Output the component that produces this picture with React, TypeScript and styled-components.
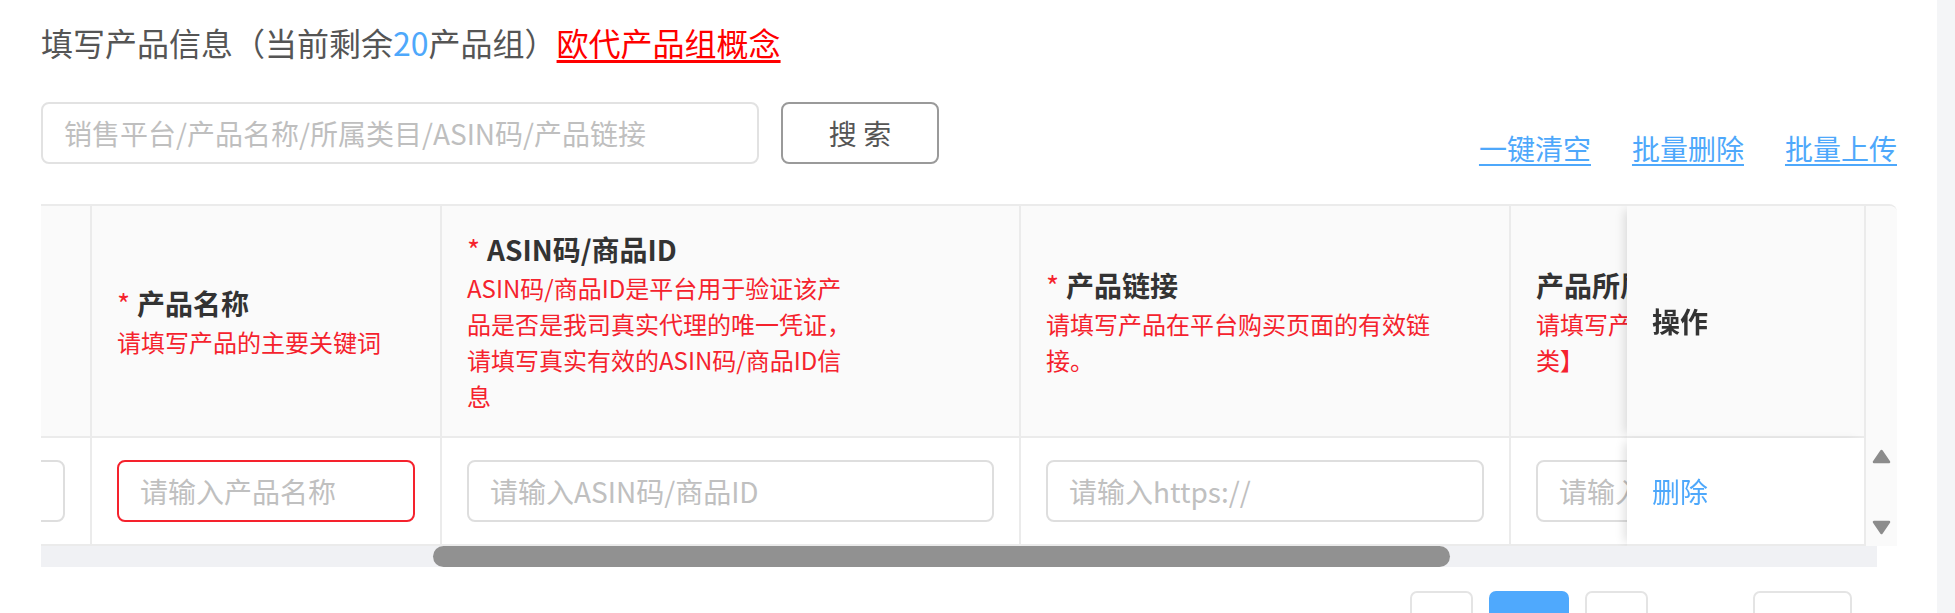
import React, { useLayoutEffect, useRef, useState } from "react";
import styled, { createGlobalStyle } from "styled-components";

const GlobalStyle = createGlobalStyle`
  html, body {
    margin: 0;
    padding: 0;
    background: #fff;
  }
  body {
    font-family: "Noto Sans CJK SC", "Noto Sans", sans-serif;
    overflow: hidden;
  }
`;

// columns before the ones in view; the table is scrolled past most of them
const SCROLL_LEFT = 703;

interface Column {
  key: string;
  width: number;
  label: string;
  required?: boolean;
  hint?: string;
  placeholder?: string;
  invalid?: boolean;
}

const columns: Column[] = [
  { key: "seq", width: 120, label: "序号" },
  { key: "platform", width: 300, label: "销售平台", required: true, hint: "请选择产品销售的平台", placeholder: "请选择销售平台" },
  { key: "brand", width: 334, label: "产品品牌", required: true, hint: "请填写产品的品牌名称", placeholder: "请输入产品品牌" },
  { key: "name", width: 350, label: "产品名称", required: true, hint: "请填写产品的主要关键词", placeholder: "请输入产品名称", invalid: true },
  {
    key: "asin",
    width: 579,
    label: "ASIN码/商品ID",
    required: true,
    hint: "ASIN码/商品ID是平台用于验证该产品是否是我司真实代理的唯一凭证，请填写真实有效的ASIN码/商品ID信息",
    placeholder: "请输入ASIN码/商品ID",
  },
  { key: "url", width: 490, label: "产品链接", required: true, hint: "请填写产品在平台购买页面的有效链接。", placeholder: "请输入https://" },
  { key: "category", width: 480, label: "产品所属类目", hint: "请填写产品所属类目【如：家居厨房类】", placeholder: "请输入产品所属类目" },
  { key: "remark", width: 403, label: "备注", hint: "选填", placeholder: "请输入备注" },
];

const ACTION_WIDTH = 239;

const Page = styled.div`
  display: flex;
  width: 1955px;
  height: 613px;
  overflow: hidden;
`;

const Main = styled.main`
  flex: 1;
  min-width: 0;
  padding: 18px 40px 0 41px;
`;

const RightStrip = styled.div`
  width: 18px;
  background: #f4f5f7;
`;

const Title = styled.h2`
  margin: 0;
  font-size: 32px;
  font-weight: 400;
  line-height: 48px;
  color: #555;
`;

const Count = styled.span`
  color: #4ea8fb;
`;

const ConceptLink = styled.a`
  color: #ff0000;
  text-decoration: underline;
  text-underline-offset: 4px;
  cursor: pointer;
`;

const Toolbar = styled.div`
  display: flex;
  align-items: flex-end;
  height: 62px;
  margin-top: 36px;
`;

const SearchInput = styled.input`
  box-sizing: border-box;
  width: 718px;
  height: 62px;
  padding: 0 21px;
  border: 2px solid #e2e2e2;
  border-radius: 8px;
  outline: none;
  font-family: inherit;
  font-size: 28px;
  color: #333;
  &::placeholder {
    color: #bfbfbf;
  }
`;

const SearchButton = styled.button`
  box-sizing: border-box;
  width: 158px;
  height: 62px;
  margin-left: 22px;
  border: 2px solid #9a9a9a;
  border-radius: 8px;
  background: #fff;
  font-family: inherit;
  font-size: 28px;
  color: #555;
  cursor: pointer;
`;

const Actions = styled.div`
  display: flex;
  gap: 41px;
  margin-left: auto;
`;

const ActionLink = styled.a`
  font-size: 28px;
  line-height: 32px;
  color: #4ea8fb;
  text-decoration: underline;
  text-underline-offset: 4px;
  cursor: pointer;
`;

const TableFrame = styled.div`
  display: flex;
  margin-top: 40px;
  border-top: 2px solid #ebebeb;
  border-top-right-radius: 8px;
  overflow: hidden;
`;

const ScrollPane = styled.div`
  flex: 1;
  min-width: 0;
  overflow: hidden;
`;

const Grid = styled.table`
  border-collapse: separate;
  border-spacing: 0;
  table-layout: fixed;
`;

const HeadCell = styled.th<{ $sticky?: boolean }>`
  box-sizing: border-box;
  height: 232px;
  padding: 0 25px;
  background: #fafafa;
  border-right: 2px solid #ebebeb;
  border-bottom: 2px solid #ebebeb;
  text-align: left;
  vertical-align: middle;
  font-weight: 400;
  ${(p) =>
    p.$sticky &&
    `
    position: sticky;
    right: 0;
    z-index: 2;
    box-shadow: -6px 0 10px -4px rgba(0, 0, 0, 0.14);
  `}
`;

const BodyCell = styled.td<{ $sticky?: boolean }>`
  box-sizing: border-box;
  height: 108px;
  padding: 0 25px;
  background: #fff;
  border-right: 2px solid #ebebeb;
  border-bottom: 2px solid #ebebeb;
  vertical-align: middle;
  font-size: 28px;
  color: #555;
  ${(p) =>
    p.$sticky &&
    `
    position: sticky;
    right: 0;
    z-index: 2;
    box-shadow: -6px 0 10px -4px rgba(0, 0, 0, 0.14);
  `}
`;

const HeadInner = styled.div`
  max-width: 390px;
`;

const HeadLabel = styled.div`
  font-size: 28px;
  line-height: 42px;
  font-weight: 700;
  color: #333;
  white-space: nowrap;
`;

const Star = styled.span`
  font-weight: 400;
  color: #f5222d;
  margin-right: 7px;
`;

const HeadHint = styled.div`
  font-size: 24px;
  line-height: 36px;
  color: #f5222d;
`;

const CellInput = styled.input<{ $invalid?: boolean }>`
  box-sizing: border-box;
  width: 100%;
  height: 62px;
  padding: 0 21px;
  border: 2px solid ${(p) => (p.$invalid ? "#f5222d" : "#dedede")};
  border-radius: 8px;
  outline: none;
  font-family: inherit;
  font-size: 28px;
  color: #333;
  &::placeholder {
    color: #c0c0c0;
  }
`;

const DeleteLink = styled.a`
  color: #4ea8fb;
  cursor: pointer;
`;

const Gutter = styled.div`
  display: flex;
  flex-direction: column;
  width: 31px;
`;

const GutterHead = styled.div`
  height: 232px;
  background: #fafafa;
`;

const GutterBody = styled.div`
  display: flex;
  flex-direction: column;
  justify-content: space-between;
  align-items: center;
  height: 108px;
  padding: 11px 0 11px;
  box-sizing: border-box;
  background: #fafafa;
`;

const HTrack = styled.div`
  height: 21px;
  margin-right: 20px;
  background: #f0f1f4;
`;

const HThumb = styled.div`
  height: 21px;
  border-radius: 11px;
  background: #919191;
`;

const Pager = styled.div`
  display: flex;
  align-items: flex-start;
  justify-content: flex-end;
  gap: 16px;
  margin-top: 24px;
  padding-right: 45px;
`;

const PageBox = styled.div<{ $active?: boolean; $w: number }>`
  box-sizing: border-box;
  display: flex;
  align-items: center;
  justify-content: center;
  width: ${(p) => p.$w}px;
  height: 64px;
  border: ${(p) => (p.$active ? "none" : "2px solid #e4e4e4")};
  border-radius: 7px;
  background: ${(p) => (p.$active ? "#4fa9fd" : "#fff")};
  color: ${(p) => (p.$active ? "#fff" : "#555")};
  font-size: 24px;
`;

const JumpLabel = styled.span`
  margin: 0 2px 0 23px;
  padding-top: 19px;
  font-size: 24px;
  line-height: 36px;
  color: #555;
`;

const Arrow = ({ down }: { down?: boolean }) => (
  <svg width="19" height="15" viewBox="0 0 19 15">
    <path
      d={down ? "M2 2 H17 L9.5 13 Z" : "M9.5 2 L17 13 H2 Z"}
      fill="#8c8c8c"
      stroke="#8c8c8c"
      strokeWidth="2.5"
      strokeLinejoin="round"
    />
  </svg>
);

const App = () => {
  const paneRef = useRef<HTMLDivElement>(null);
  const trackRef = useRef<HTMLDivElement>(null);
  const [thumb, setThumb] = useState({ left: 0, width: 0 });

  useLayoutEffect(() => {
    const pane = paneRef.current;
    const track = trackRef.current;
    if (!pane || !track) return;
    pane.scrollLeft = SCROLL_LEFT;
    const trackW = track.clientWidth;
    const width = (trackW * pane.clientWidth) / pane.scrollWidth;
    const range = pane.scrollWidth - pane.clientWidth;
    const left = range > 0 ? ((trackW - width) * pane.scrollLeft) / range : 0;
    setThumb({ left, width });
  }, []);

  const tableWidth = columns.reduce((s, c) => s + c.width, 0) + ACTION_WIDTH;

  return (
    <>
      <GlobalStyle />
      <Page>
        <Main>
          <Title>
            填写产品信息（当前剩余<Count>20</Count>产品组）<ConceptLink>欧代产品组概念</ConceptLink>
          </Title>

          <Toolbar>
            <SearchInput placeholder="销售平台/产品名称/所属类目/ASIN码/产品链接" />
            <SearchButton>搜 索</SearchButton>
            <Actions>
              <ActionLink>一键清空</ActionLink>
              <ActionLink>批量删除</ActionLink>
              <ActionLink>批量上传</ActionLink>
            </Actions>
          </Toolbar>

          <TableFrame>
            <ScrollPane ref={paneRef}>
              <Grid style={{ width: tableWidth }}>
                <colgroup>
                  {columns.map((c) => (
                    <col key={c.key} style={{ width: c.width }} />
                  ))}
                  <col style={{ width: ACTION_WIDTH }} />
                </colgroup>
                <thead>
                  <tr>
                    {columns.map((c) => (
                      <HeadCell key={c.key}>
                        <HeadInner>
                          <HeadLabel>
                            {c.required && <Star>*</Star>}
                            {c.label}
                          </HeadLabel>
                          {c.hint && <HeadHint>{c.hint}</HeadHint>}
                        </HeadInner>
                      </HeadCell>
                    ))}
                    <HeadCell $sticky>
                      <HeadLabel>操作</HeadLabel>
                    </HeadCell>
                  </tr>
                </thead>
                <tbody>
                  <tr>
                    {columns.map((c) => (
                      <BodyCell key={c.key}>
                        {c.placeholder ? (
                          <CellInput $invalid={c.invalid} placeholder={c.placeholder} />
                        ) : (
                          "1"
                        )}
                      </BodyCell>
                    ))}
                    <BodyCell $sticky>
                      <DeleteLink>删除</DeleteLink>
                    </BodyCell>
                  </tr>
                </tbody>
              </Grid>
            </ScrollPane>
            <Gutter>
              <GutterHead />
              <GutterBody>
                <Arrow />
                <Arrow down />
              </GutterBody>
            </Gutter>
          </TableFrame>

          <HTrack ref={trackRef}>
            <HThumb style={{ marginLeft: thumb.left, width: thumb.width }} />
          </HTrack>

          <Pager>
            <PageBox $w={63}>‹</PageBox>
            <PageBox $w={80} $active>
              1
            </PageBox>
            <PageBox $w={63}>›</PageBox>
            <JumpLabel>前往</JumpLabel>
            <PageBox $w={99}>1</PageBox>
          </Pager>
        </Main>
        <RightStrip />
      </Page>
    </>
  );
};

export default App;
